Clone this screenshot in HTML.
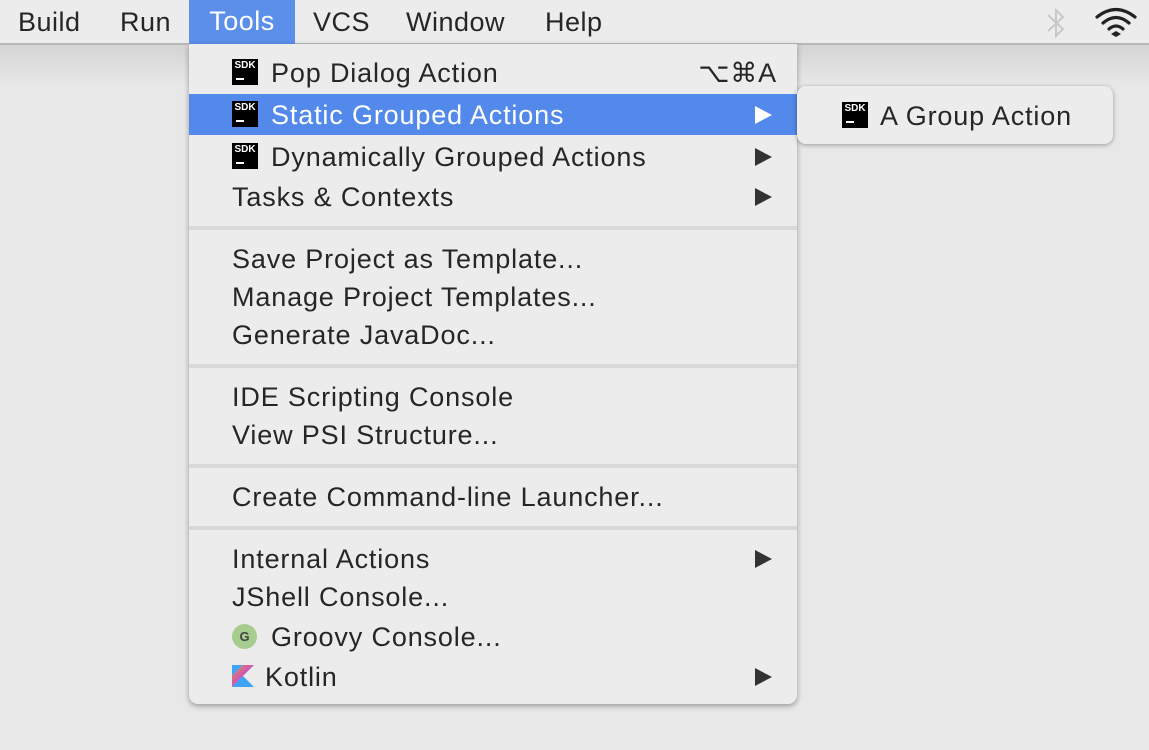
<!DOCTYPE html>
<html><head><style>
body{margin:0;width:1149px;height:750px;overflow:hidden;background:#e8e8e8;font-family:"Liberation Sans",sans-serif;position:relative}
.bar{position:absolute;left:0;top:0;width:1149px;height:43px;background:#ececec;border-bottom:2px solid #b8b8b8}
.shade{position:absolute;left:0;top:45px;width:1149px;height:40px;background:linear-gradient(#d4d4d4,#e8e8e8)}
.mi{position:absolute;top:1px;height:43px;line-height:43px;font-size:27px;letter-spacing:0.5px;color:#262626}
.menu{position:absolute;left:189px;top:44px;width:608px;height:660px;background:#ececec;border-radius:0 0 9px 9px;box-shadow:0 2px 6px rgba(0,0,0,.35)}
.t{position:absolute;font-size:27px;letter-spacing:0.85px;color:#262626;line-height:30px;white-space:nowrap;margin-top:1px}
.sep{position:absolute;left:0;width:608px;height:4px;background:#d9d9d9}
.sdk{position:absolute;width:26px;height:26px;background:#000;color:#fff;font-size:10px;font-weight:bold;line-height:14px;text-align:center}
.sdk i{position:absolute;left:4px;top:19px;width:8px;height:2px;background:#fff}
.arr{position:absolute;left:566px;width:0;height:0;border-left:17px solid #333;border-top:9px solid transparent;border-bottom:9px solid transparent}
</style></head><body>
<div class="shade"></div>
<div class="bar"></div>
<div class="mi" style="left:18px">Build</div>
<div class="mi" style="left:120px">Run</div>
<div class="mi" style="left:189px;width:106px;background:#5b8fea;color:#fff;text-align:center;top:0;height:44px">Tools</div>
<div class="mi" style="left:313px">VCS</div>
<div class="mi" style="left:406px">Window</div>
<div class="mi" style="left:545px">Help</div>
<svg style="position:absolute;left:1044px;top:6px" width="24" height="34" viewBox="0 0 24 34"><path d="M4 9 L19 23 L12 30 V4 L19 11 L4 25" fill="none" stroke="#c8c8c8" stroke-width="2"/></svg>
<svg style="position:absolute;left:1094px;top:6px" width="44" height="32" viewBox="0 0 44 32"><g fill="none" stroke="#222" stroke-width="3.2" stroke-linecap="round"><path d="M3 11 Q22 -4 41 11"/><path d="M9 17 Q22 6 35 17"/><path d="M15 23 Q22 17 29 23"/></g><path d="M17 28 L22 25 L27 28 L22 31Z" fill="#222"/></svg>

<div class="menu">
<div style="position:absolute;left:0;top:50px;width:608px;height:41px;background:#5289ea"></div>
<div class="sdk" style="left:43px;top:15px">SDK<i></i></div><div class="t" style="left:82px;top:13px">Pop Dialog Action</div>
<div class="t" style="right:20px;top:13px">⌥⌘A</div>
<div class="sdk" style="left:43px;top:57px">SDK<i></i></div><div class="t" style="left:82px;top:55px;color:#fff">Static Grouped Actions</div>
<div class="arr" style="top:62px;border-left-color:#fff"></div>
<div class="sdk" style="left:43px;top:99px">SDK<i></i></div><div class="t" style="left:82px;top:97px">Dynamically Grouped Actions</div>
<div class="arr" style="top:104px"></div>
<div class="t" style="left:43px;top:137px">Tasks &amp; Contexts</div><div class="arr" style="top:144px"></div>
<div class="sep" style="top:182px"></div>
<div class="t" style="left:43px;top:199px">Save Project as Template...</div>
<div class="t" style="left:43px;top:237px">Manage Project Templates...</div>
<div class="t" style="left:43px;top:275px">Generate JavaDoc...</div>
<div class="sep" style="top:320px"></div>
<div class="t" style="left:43px;top:337px">IDE Scripting Console</div>
<div class="t" style="left:43px;top:375px">View PSI Structure...</div>
<div class="sep" style="top:420px"></div>
<div class="t" style="left:43px;top:437px">Create Command-line Launcher...</div>
<div class="sep" style="top:482px"></div>
<div class="t" style="left:43px;top:499px">Internal Actions</div><div class="arr" style="top:506px"></div>
<div class="t" style="left:43px;top:537px">JShell Console...</div>
<div style="position:absolute;left:43px;top:580px;width:25px;height:25px;border-radius:50%;background:#a6cc8f;color:#444;font-size:13px;font-weight:bold;text-align:center;line-height:25px">G</div>
<div class="t" style="left:82px;top:577px">Groovy Console...</div>
<svg style="position:absolute;left:43px;top:621px" width="22" height="22" viewBox="0 0 22 22"><defs><linearGradient id="k" x1="0" y1="0" x2="1" y2="1"><stop offset="0" stop-color="#f18e2e"/><stop offset=".5" stop-color="#c757bc"/><stop offset="1" stop-color="#3f8df0"/></linearGradient></defs><path d="M0 0H11L0 11Z" fill="#3fa3f5"/><path d="M11 0H22L0 22V11Z" fill="url(#k)"/><path d="M0 22L11 11L22 22Z" fill="#3fa3f5"/></svg>
<div class="t" style="left:76px;top:617px">Kotlin</div><div class="arr" style="top:624px"></div>
</div>

<div style="position:absolute;left:797px;top:86px;width:316px;height:58px;background:#ececec;border-radius:9px;box-shadow:0 1px 5px rgba(0,0,0,.35)">
<div class="sdk" style="left:45px;top:16px">SDK<i></i></div>
<div class="t" style="left:83px;top:14px">A Group Action</div>
</div>
</body></html>
